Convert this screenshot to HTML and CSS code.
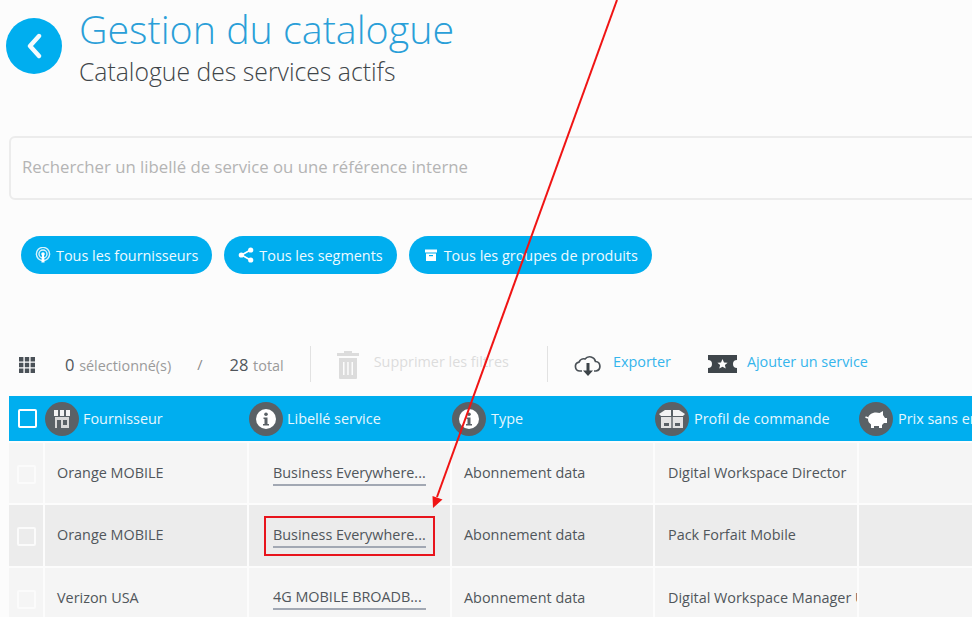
FILE: index.html
```html
<!DOCTYPE html>
<html lang="fr">
<head>
  <meta charset="UTF-8">
  <title>Gestion du catalogue</title>
  <link rel="stylesheet" href="styles.css">
</head>
<body>

  <div class="page-head">
    <a class="back-btn" href="#">
      <svg width="18" height="26" viewBox="0 0 18 26"><path d="M14 3 L5 13 L14 23" fill="none" stroke="#f4fbfe" stroke-width="4.4" stroke-linecap="round" stroke-linejoin="round"/></svg>
    </a>
    <div class="titles">
      <h1>Gestion du catalogue</h1>
      <h2>Catalogue des services actifs</h2>
    </div>
  </div>

  <div class="search-box">Rechercher un libellé de service ou une référence interne</div>

  <div class="filters">
    <a class="pill" href="#">
      <svg width="16" height="16" viewBox="0 0 16 16"><g fill="none" stroke="#d9f2fc" stroke-width="1.4"><circle cx="8" cy="7" r="6.6"/><circle cx="8" cy="7" r="4"/></g><circle cx="8" cy="7" r="1.8" fill="#fff"/><path d="M7 8h2l.6 7.5H6.4z" fill="#fff"/></svg>
      Tous les fournisseurs
    </a>
    <a class="pill" href="#">
      <svg width="16" height="16" viewBox="0 0 16 16"><path d="M12.5 3 L3.5 8 L12.5 13" fill="none" stroke="#fff" stroke-width="1.6"/><circle cx="12.7" cy="3" r="2.6" fill="#fff"/><circle cx="3.3" cy="8" r="2.6" fill="#fff"/><circle cx="12.7" cy="13" r="2.6" fill="#fff"/></svg>
      Tous les segments
    </a>
    <a class="pill" href="#">
      <svg width="16" height="14" viewBox="0 0 14 14"><path d="M1 1.5h12v3H1z" fill="#fff"/><path d="M2 5.5h10V13H2z" fill="#fff"/><path d="M5 7h4v1.2H5z" fill="#00aeef"/></svg>
      Tous les groupes de produits
    </a>
  </div>

  <div class="toolbar">
    <svg class="grid-icon" width="16" height="16" viewBox="0 0 16 16" fill="#4a5157">
      <path d="M0 0h4.4v4.4H0zM5.8 0h4.4v4.4H5.8zM11.6 0H16v4.4h-4.4zM0 5.8h4.4v4.4H0zM5.8 5.8h4.4v4.4H5.8zM11.6 5.8H16v4.4h-4.4zM0 11.6h4.4V16H0zM5.8 11.6h4.4V16H5.8zM11.6 11.6H16V16h-4.4z"/>
    </svg>
    <span class="count"><b>0</b> sélectionné(s)</span>
    <span class="slash">/</span>
    <span class="count"><b>28</b> total</span>
    <span class="sep sep-first"></span>
    <a class="tool tool-off" href="#">
      <svg width="24" height="29" viewBox="0 0 24 29"><path d="M8 3V1h8v2h7v3H1V3z" fill="#dcdcdc"/><path fill-rule="evenodd" d="M3 8h18v20a1 1 0 0 1-1 1H4a1 1 0 0 1-1-1zM7 12v13h1.500V12zM11.200 12v13h1.500V12zM15.500 12v13H17V12z" fill="#dcdcdc"/></svg>
      <span>Supprimer les filtres</span>
    </a>
    <span class="sep sep-second"></span>
    <a class="tool tool-export" href="#">
      <svg width="28" height="22" viewBox="0 0 28 22"><path d="M8 16H6a4.500 4.500 0 0 1-1-8.900A5 5 0 0 1 11 4a6 6 0 0 1 10.500 2.500A4.800 4.800 0 0 1 22 16h-2" fill="none" stroke="#4a5157" stroke-width="1.700"/><path d="M12.500 8h3v7.500H19L14 21l-5-5.500h3.500z" fill="#3c4348"/></svg>
      <span>Exporter</span>
    </a>
    <a class="tool tool-add" href="#">
      <svg width="29" height="18" viewBox="0 0 29 18"><path fill-rule="evenodd" d="M0 0h29v5a4 4 0 0 0 0 8v5H0v-5a4 4 0 0 0 0-8zM14.500 4l1.500 3.400 3.600.3-2.700 2.400.8 3.500-3.200-1.900-3.200 1.900.8-3.500-2.700-2.400 3.600-.3z" fill="#3f464b"/></svg>
      <span>Ajouter un service</span>
    </a>
  </div>

  <div class="table">
    <div class="thead">
      <div class="th th-check"><span class="head-box"></span></div>
      <div class="th th-tight">
        <span class="head-icon">
          <svg width="18" height="20" viewBox="0 0 18 20"><path d="M1 1h16v6H1z" fill="#f2f2f2"/><path d="M5 1h2v6H5zM11 1h2v6h-2z" fill="#5a6166"/><path d="M2 8h14v11H2z" fill="#d8d8d8"/><path d="M4 11h4v8H4z" fill="#5a6166"/><path d="M10 11h4v5h-4z" fill="#5a6166"/></svg>
        </span>
        Fournisseur
      </div>
      <div class="th th-tight">
        <span class="head-icon">
          <svg width="22" height="22" viewBox="0 0 22 22"><circle cx="11" cy="11" r="10" fill="#fff"/><circle cx="11" cy="6.200" r="1.800" fill="#5a6166"/><path d="M8.500 9.500h4v6.500H14v1.600H8v-1.600h1.500v-4.900h-1z" fill="#5a6166"/></svg>
        </span>
        Libellé service
      </div>
      <div class="th">
        <span class="head-icon">
          <svg width="22" height="22" viewBox="0 0 22 22"><circle cx="11" cy="11" r="10" fill="#fff"/><circle cx="11" cy="6.200" r="1.800" fill="#5a6166"/><path d="M8.500 9.500h4v6.500H14v1.600H8v-1.600h1.500v-4.900h-1z" fill="#5a6166"/></svg>
        </span>
        Type
      </div>
      <div class="th">
        <span class="head-icon">
          <svg width="28" height="20" viewBox="0 0 28 20"><path d="M1 5l6-4h6v6H3zM27 5l-6-4h-6v6h10z" fill="#f4f4f4"/><path d="M3 8h10.300v11H3zM14.700 8H25v11H14.700z" fill="#e4e4e4"/><path d="M6 14h5v3H6zM17 14h5v3h-5z" fill="#5a6166"/></svg>
        </span>
        Profil de commande
      </div>
      <div class="th">
        <span class="head-icon">
          <svg width="24" height="20" viewBox="0 0 24 20"><path d="M4 10c0-4 4-6.500 8-6.500 1.500 0 2.500.2 3.500.5L19 2v4l2 3h2v5h-3l-2 2v3h-3v-2h-5v2H7v-3.500C5 14 4 12.500 4 10z" fill="#fff"/><path d="M4 9L1.500 8" stroke="#fff" stroke-width="1.500"/></svg>
        </span>
        Prix sans engagement
      </div>
    </div>

    <div class="row">
      <div class="td td-check"><span class="row-box"></span></div>
      <div class="td">Orange MOBILE</div>
      <div class="td td-link"><a href="#">Business Everywhere...</a></div>
      <div class="td">Abonnement data</div>
      <div class="td td-clip">Digital Workspace Director</div>
      <div class="td"></div>
    </div>
    <div class="row row-hover">
      <div class="td td-check"><span class="row-box"></span></div>
      <div class="td">Orange MOBILE</div>
      <div class="td td-link"><a href="#">Business Everywhere...</a></div>
      <div class="td">Abonnement data</div>
      <div class="td td-clip">Pack Forfait Mobile</div>
      <div class="td"></div>
    </div>
    <div class="row">
      <div class="td td-check"><span class="row-box"></span></div>
      <div class="td">Verizon USA</div>
      <div class="td td-link"><a href="#">4G MOBILE BROADB...</a></div>
      <div class="td">Abonnement data</div>
      <div class="td td-clip">Digital Workspace Manager Unlimited</div>
      <div class="td"></div>
    </div>
  </div>

  <!-- annotation drawn over the screenshot -->
  <div class="red-box"></div>
  <svg class="red-arrow" width="972" height="617" viewBox="0 0 972 617">
    <path d="M617 0 L437 497" stroke="#f01414" stroke-width="2" fill="none"/>
    <path d="M433 508 L432.500 496 L442.500 499.500z" fill="#f01414"/>
  </svg>

</body>
</html>
```

FILE: styles.css
```css
html, body {
  height: 617px;
  overflow: hidden;
}

body {
  position: relative;
  margin: 0;
  font-family: 'Open Sans', sans-serif;
  font-size: 14.400px;
  background: #fcfcfc;
  color: #50565b;
}

a {
  text-decoration: none;
}

.page-head {
  display: flex;
  align-items: flex-start;
  gap: 17px;
  padding: 8px 0 0 6px;
  height: 126px;
  box-sizing: border-box;
}

.back-btn {
  display: flex;
  align-items: center;
  justify-content: center;
  flex: none;
  width: 56px;
  height: 56px;
  margin-top: 10px;
  border-radius: 50%;
  background: #00aeef;
}

.titles h1 {
  margin: 0;
  font-size: 39.400px;
  line-height: 43px;
  font-weight: 300;
  color: #2a9fd8;
}

.titles h2 {
  margin: 0;
  font-size: 24.750px;
  line-height: 42px;
  font-weight: 300;
  color: #3f4549;
}

.search-box {
  display: flex;
  align-items: center;
  height: 64px;
  box-sizing: border-box;
  margin: 10px -20px 0 9px;
  padding: 0 11px 3px;
  border: 2px solid #ececec;
  border-radius: 6px;
  font-size: 16.750px;
  color: #b4b4b4;
}

.filters {
  display: flex;
  gap: 12px;
  margin: 36px 0 0 21px;
}

.pill {
  display: flex;
  align-items: center;
  gap: 5px;
  height: 38px;
  padding: 0 14px;
  border-radius: 19px;
  background: #00aeef;
  color: #eefaff;
  white-space: nowrap;
}

.toolbar {
  display: flex;
  align-items: center;
  height: 52px;
  margin: 64px 0 6px;
  padding-left: 19px;
  white-space: nowrap;
}

.grid-icon {
  margin-top: 1px;
}

.count {
  margin-left: 30px;
  font-size: 14.400px;
  color: #9a9a9a;
}

.count b {
  margin-right: 1px;
  font-size: 16.500px;
  font-weight: 400;
  color: #50565b;
}

.slash {
  margin-left: 26px;
  color: #8a8a8a;
}

.slash + .count {
  margin-left: 27px;
}

.sep {
  width: 1px;
  height: 36px;
  background: #e2e2e2;
}

.sep-first {
  margin-left: 26px;
}

.sep-second {
  margin-left: 38px;
}

.tool {
  display: flex;
  align-items: center;
  color: #35b5ec;
}

.tool span {
  margin-top: -6px;
}

.tool-off {
  gap: 14px;
  margin-left: 25px;
  color: #dcdcdc;
}

.tool-export {
  gap: 11px;
  margin-left: 26px;
}

.tool-export svg {
  margin-top: 3px;
}

.tool-add {
  gap: 10px;
  margin-left: 37px;
}

.table {
  margin: 0 0 0 9px;
  width: 1180px;
}

.thead,
.row {
  display: grid;
  grid-template-columns: 34px 202px 201px 201px 202px 202px 1fr;
  column-gap: 2px;
}

.thead {
  height: 45px;
  background: #00aeef;
}

.th {
  display: flex;
  align-items: center;
  gap: 5px;
  color: #e6f7fe;
  white-space: nowrap;
}

.th-tight {
  gap: 4px;
}

.th-check {
  padding-left: 9px;
}

.head-box {
  width: 15px;
  height: 15px;
  border: 2px solid #fff;
  border-radius: 2px;
}

.head-icon {
  display: flex;
  align-items: center;
  justify-content: center;
  flex: none;
  width: 34px;
  height: 34px;
  margin-top: 1px;
  border-radius: 50%;
  background: #5a6166;
}

.row {
  height: 60.300px;
  margin-top: 2px;
}

.td {
  display: flex;
  align-items: center;
  padding-left: 12px;
  padding-bottom: 1px;
  background: #f5f5f5;
  white-space: nowrap;
  overflow: hidden;
}

.row-hover .td {
  background: #ececec;
}

.td-check {
  padding-left: 8px;
}

.row-box {
  width: 15px;
  height: 15px;
  margin-top: 4px;
  border: 2px solid #fbfbfb;
  border-radius: 2px;
}

.td-link {
  padding-left: 24px;
}

.td-link a {
  display: block;
  width: 153px;
  margin-top: 3px;
  padding-bottom: 2px;
  border-bottom: 2px solid #a2a8b3;
  color: #50565b;
}

.td-clip {
  padding-left: 13px;
}

.red-box {
  position: absolute;
  left: 264px;
  top: 516px;
  width: 167px;
  height: 36px;
  border: 2px solid #e8141c;
}

.red-arrow {
  position: absolute;
  left: 0;
  top: 0;
  pointer-events: none;
}
```
